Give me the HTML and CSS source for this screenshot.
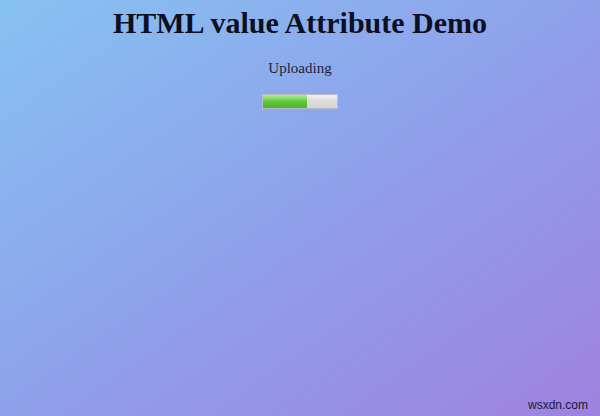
FILE: index.html
```html
<!DOCTYPE html>
<html>
<head>
<meta charset="utf-8">
<title>HTML value Attribute Demo</title>
<link rel="stylesheet" href="styles.css">
</head>
<body>
<div class="page">
  <h1 class="title">HTML value Attribute Demo</h1>
  <p class="label">Uploading</p>
  <div class="progress" role="progressbar" aria-valuenow="60" aria-valuemax="100">
    <div class="progress-fill" style="width: 60%"></div>
  </div>
  <div class="spacer"></div>
  <div class="watermark">wsxdn.com</div>
</div>
</body>
</html>
```
FILE: styles.css
```css
html, body {
  margin: 0;
  padding: 0;
  height: 100%;
}
body {
  background: linear-gradient(to bottom right, #86c2f1 0%, #8fa0eb 50%, #9e82e0 100%);
  font-family: "Liberation Serif", "Times New Roman", serif;
  color: #111;
}
.page {
  height: 416px;
  display: flex;
  flex-direction: column;
  align-items: center;
  box-sizing: border-box;
  padding-top: 5px;
}
.title {
  margin: 0;
  font-size: 30px;
  font-weight: bold;
  line-height: 35px;
  color: #0d0f22;
}
.label {
  margin: 20px 0 0 0;
  font-size: 15px;
  line-height: 17px;
  color: #1a1f3a;
}
.progress {
  margin-top: 17px;
  width: 76px;
  height: 15px;
  box-sizing: border-box;
  border: 1px solid #b9bcc6;
  background: linear-gradient(to bottom, #f2f2f2 0%, #dedede 40%, #d4d4d4 100%);
  display: flex;
}
.progress-fill {
  height: 100%;
  background: linear-gradient(to bottom, #b3ec8c 0%, #86d862 30%, #5cc23c 55%, #4fb52f 100%);
}
.spacer {
  flex: 1;
}
.watermark {
  align-self: flex-end;
  margin: 0 12px 4px 0;
  font-family: "Liberation Sans", Arial, sans-serif;
  font-size: 12px;
  line-height: 14px;
  color: #1a1a3a;
}
```
